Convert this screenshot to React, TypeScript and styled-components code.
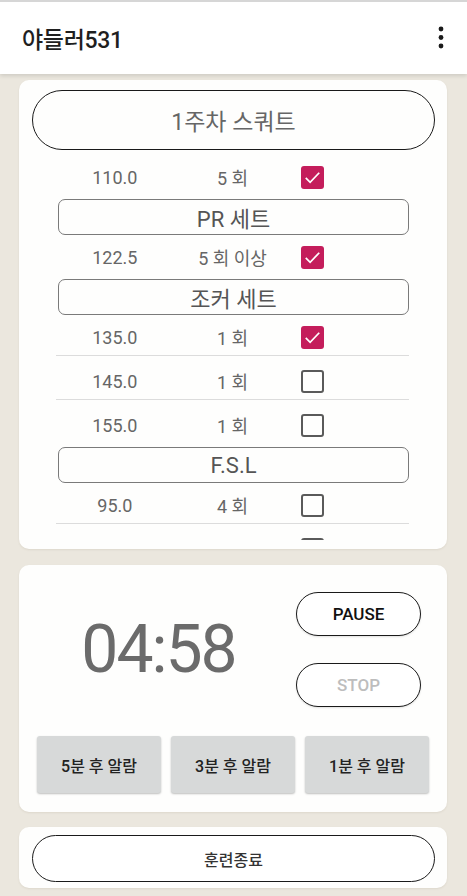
import React from "react";
import styled, { createGlobalStyle } from "styled-components";

const GlobalStyle = createGlobalStyle`
  body {
    margin: 0;
    background: #ebe7de;
    font-family: Roboto, "Noto Sans CJK KR", sans-serif;
  }
`;

const Page = styled.div`
  width: 467px;
  min-height: 896px;
  background: #ebe7de;
`;

const AppBar = styled.header`
  height: 72px;
  border-top: 2px solid #d6d6d6;
  background: #ffffff;
  box-shadow: 0 2px 4px rgba(0, 0, 0, 0.12);
  display: flex;
  align-items: center;
  justify-content: space-between;
  padding: 0 16px 0 22px;
`;

const AppTitle = styled.h1`
  margin: 0;
  font-size: 23px;
  font-weight: 500;
  color: #1f1f1f;
  letter-spacing: -0.3px;
`;

const MenuButton = styled.div`
  width: 20px;
  height: 30px;
  display: flex;
  align-items: center;
  justify-content: center;
`;

const Main = styled.main`
  padding: 6px 20px 0 19px;
  display: flex;
  flex-direction: column;
`;

const Card = styled.section<{ $height: number; $gap?: number }>`
  height: ${({ $height }) => $height}px;
  margin-bottom: ${({ $gap }) => $gap ?? 0}px;
  background: #fefefd;
  border-radius: 10px;
  box-shadow: 0 1px 2px rgba(120, 110, 80, 0.12);
  box-sizing: border-box;
  overflow: hidden;
`;

const ListCard = styled(Card)`
  padding: 10px 12px 0 13px;
`;

const TitlePill = styled.div`
  height: 60px;
  box-sizing: border-box;
  border: 1.5px solid #1a1a1a;
  border-radius: 30px;
  display: flex;
  align-items: center;
  justify-content: center;
  font-size: 23px;
  color: #666666;
`;

/* scroll area of the set list, clipped above the card's bottom edge */
const SetList = styled.div`
  height: 385px;
  overflow: hidden;
  margin: 5px 26px 0 24px;
`;

const SectionPill = styled.div`
  height: 36px;
  margin: 0 0 0 2px;
  box-sizing: border-box;
  border: 1.3px solid #7a7a7a;
  border-radius: 7px;
  display: flex;
  align-items: center;
  justify-content: center;
  font-size: 22px;
  color: #555555;
`;

const Row = styled.div<{ $divider?: boolean }>`
  height: 44px;
  display: grid;
  grid-template-columns: 1fr 1fr 1fr;
  align-items: center;
  font-size: 18px;
  color: #666666;
  background: ${({ $divider }) =>
    $divider
      ? "linear-gradient(#dcdcdc, #dcdcdc) no-repeat 0 calc(100% - 3px) / 100% 1px"
      : "none"};
`;

const Cell = styled.div`
  text-align: center;
`;

const CheckCell = styled.div`
  padding-left: 10px;
  display: flex;
  align-items: center;
`;

const Box = styled.div<{ $checked?: boolean }>`
  width: 23px;
  height: 23px;
  box-sizing: border-box;
  border-radius: 3px;
  border: ${({ $checked }) => ($checked ? "none" : "2.2px solid #5a5a5a")};
  background: ${({ $checked }) => ($checked ? "#c41d5b" : "transparent")};
  display: flex;
  align-items: center;
  justify-content: center;
`;

const TimerCard = styled(Card)`
  padding: 27px 18px 19px 18px;
  display: flex;
  flex-direction: column;
  justify-content: space-between;
`;

const TimerTop = styled.div`
  display: flex;
  align-items: center;
  padding-right: 8px;
`;

const TimeText = styled.div`
  flex: 1;
  text-align: center;
  padding-right: 16px;
  font-size: 66px;
  letter-spacing: -2px;
  color: #6b6b6b;
`;

const ControlColumn = styled.div`
  width: 125px;
  display: flex;
  flex-direction: column;
  gap: 27px;
`;

const OutlineButton = styled.button<{ $muted?: boolean }>`
  height: 44px;
  border: 1.5px solid #1a1a1a;
  border-radius: 22px;
  background: #ffffff;
  font-family: Roboto, sans-serif;
  font-size: 17px;
  font-weight: 500;
  color: ${({ $muted }) => ($muted ? "#bdbdbd" : "#111111")};
  box-shadow: 0 1px 2px rgba(0, 0, 0, 0.12);
`;

const AlarmRow = styled.div`
  display: grid;
  grid-template-columns: repeat(3, 1fr);
  gap: 10px;
`;

const AlarmButton = styled.button`
  height: 57px;
  border: none;
  border-radius: 3px;
  background: #d7d9d9;
  box-shadow: 0 1px 2px rgba(0, 0, 0, 0.25);
  font-family: Roboto, "Noto Sans CJK KR", sans-serif;
  font-size: 16px;
  font-weight: 500;
  color: #222222;
`;

const FinishCard = styled(Card)`
  padding: 8px 12px 0 13px;
`;

const FinishButton = styled.button`
  width: 100%;
  height: 47px;
  border: 1.5px solid #1a1a1a;
  border-radius: 24px;
  background: #ffffff;
  font-family: Roboto, "Noto Sans CJK KR", sans-serif;
  font-size: 16px;
  font-weight: 500;
  color: #333333;
`;

type SetRow = { kind: "row"; weight: string; reps: string; done: boolean; divider?: boolean };
type Section = { kind: "section"; title: string };

// the last row sits below the scroll edge; only its checkbox top peeks out
const items: (SetRow | Section)[] = [
  { kind: "row", weight: "110.0", reps: "5 회", done: true },
  { kind: "section", title: "PR 세트" },
  { kind: "row", weight: "122.5", reps: "5 회 이상", done: true },
  { kind: "section", title: "조커 세트" },
  { kind: "row", weight: "135.0", reps: "1 회", done: true, divider: true },
  { kind: "row", weight: "145.0", reps: "1 회", done: false, divider: true },
  { kind: "row", weight: "155.0", reps: "1 회", done: false },
  { kind: "section", title: "F.S.L" },
  { kind: "row", weight: "95.0", reps: "4 회", done: false, divider: true },
  { kind: "row", weight: "", reps: "", done: false, divider: true },
];

const Check = ({ checked }: { checked: boolean }) => (
  <Box $checked={checked}>
    {checked && (
      <svg width="19" height="19" viewBox="0 0 24 24">
        <path d="M3.5 12.5l5.5 5.5L20.5 6" fill="none" stroke="#fff" strokeWidth="2.2" />
      </svg>
    )}
  </Box>
);

const App = () => {
  return (
    <Page>
      <GlobalStyle />
      <AppBar>
        <AppTitle>야들러531</AppTitle>
        <MenuButton>
          <svg width="8" height="26" viewBox="0 0 8 26">
            <circle cx="4" cy="4" r="2.4" fill="#1a1a1a" />
            <circle cx="4" cy="12.5" r="2.4" fill="#1a1a1a" />
            <circle cx="4" cy="21" r="2.4" fill="#1a1a1a" />
          </svg>
        </MenuButton>
      </AppBar>
      <Main>
        <ListCard $height={469} $gap={16}>
          <TitlePill>1주차 스쿼트</TitlePill>
          <SetList>
            {items.map((it, i) =>
              it.kind === "section" ? (
                <SectionPill key={i}>{it.title}</SectionPill>
              ) : (
                <Row key={i} $divider={it.divider}>
                  <Cell>{it.weight}</Cell>
                  <Cell>{it.reps}</Cell>
                  <CheckCell>
                    <Check checked={it.done} />
                  </CheckCell>
                </Row>
              )
            )}
          </SetList>
        </ListCard>
        <TimerCard $height={247} $gap={15}>
          <TimerTop>
            <TimeText>04:58</TimeText>
            <ControlColumn>
              <OutlineButton>PAUSE</OutlineButton>
              <OutlineButton $muted>STOP</OutlineButton>
            </ControlColumn>
          </TimerTop>
          <AlarmRow>
            <AlarmButton>5분 후 알람</AlarmButton>
            <AlarmButton>3분 후 알람</AlarmButton>
            <AlarmButton>1분 후 알람</AlarmButton>
          </AlarmRow>
        </TimerCard>
        <FinishCard $height={61}>
          <FinishButton>훈련종료</FinishButton>
        </FinishCard>
      </Main>
    </Page>
  );
};

export default App;
